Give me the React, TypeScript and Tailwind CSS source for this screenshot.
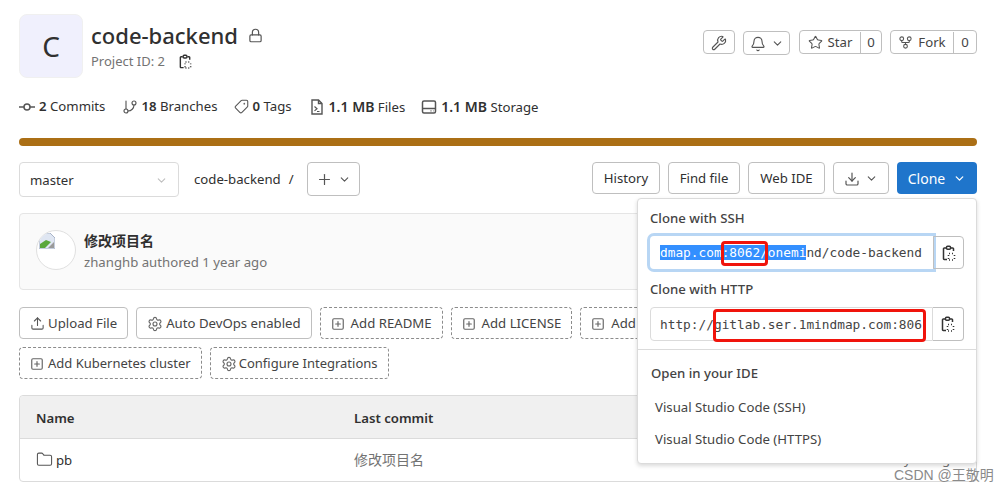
import React from "react";
import { Wrench, Bell, ChevronDown, Star, GitFork, Lock, Plus, Download, Upload, Settings, SquarePlus, Folder, GitBranch, Tag } from "lucide-react";

const sans = "font-['Noto_Sans','Open_Sans',sans-serif]";
const mono = "font-['DejaVu_Sans_Mono',monospace]";
const cjk = "font-['Noto_Sans','Noto_Sans_CJK_SC',sans-serif]";

function Clip({ size = 16 }: { size?: number }) {
  return (
    <svg width={size} height={size} viewBox="0 0 16 16" fill="none" stroke="#333" strokeWidth="1.5">
      <path d="M5 3H3.2a.7.7 0 0 0-.7.7v10.1a.7.7 0 0 0 .7.7H6" />
      <path d="M10 3h1.8a.7.7 0 0 1 .7.7V6" />
      <rect x="5.5" y="1.3" width="4" height="3" rx="1" />
      <path d="M8 8.5h1M11 8.5h1M13.5 10v1M13.5 13v1M8 15h1M11 15h1M7.5 10v1M7.5 13v1" strokeWidth="1.6" />
    </svg>
  );
}

function CommitIcon() {
  return (
    <svg width="16" height="16" viewBox="0 0 16 16" fill="none" stroke="#555" strokeWidth="1.5">
      <circle cx="8" cy="8" r="3" />
      <path d="M0 8h5M11 8h5" />
    </svg>
  );
}

function FileIcon() {
  return (
    <svg width="16" height="16" viewBox="0 0 16 16" fill="none" stroke="#555" strokeWidth="1.4">
      <path d="M3 1h6.5L13 4.5V15H3z" />
      <path d="M9.5 1v3.5H13" />
      <path d="M5.5 7.5L8 9.7l-2.5 2.2M8 12.5h2.5" strokeWidth="1.2" />
    </svg>
  );
}

function DiskIcon() {
  return (
    <svg width="16" height="16" viewBox="0 0 16 16" fill="none" stroke="#555" strokeWidth="1.5">
      <rect x="1.5" y="2" width="13" height="12" rx="1.5" />
      <path d="M1.5 9.5h13" />
      <path d="M9.5 11.8h1M12 11.8h.5" strokeWidth="1.3" />
    </svg>
  );
}

function Btn({ children, className = "" }: { children: React.ReactNode; className?: string }) {
  return (
    <div className={`flex items-center justify-center rounded border border-[#bfbfbf] bg-white pt-[1px] text-[13.2px] text-[#303030] ${className}`}>
      {children}
    </div>
  );
}

function Stat({ icon, bold, label, className = "", boldClass = "text-[13.2px]" }: { icon: React.ReactNode; bold: string; label: string; className?: string; boldClass?: string }) {
  return (
    <div className={`flex items-center text-[13.2px] text-[#303030] ${className}`}>
      {icon}
      <span className="whitespace-nowrap"><b className={`font-semibold ${boldClass}`}>{bold}</b> {label}</span>
    </div>
  );
}

function ActionBtn({ icon, label, dashed, className = "gap-[5px] text-[13.2px]" }: { icon: React.ReactNode; label: string; dashed?: boolean; className?: string }) {
  return (
    <div className={`flex h-[32px] shrink-0 items-center rounded border px-[10px] pt-[1px] text-[#444] ${dashed ? "border-dashed border-[#8c8c8c]" : "border-[#bfbfbf]"} ${className}`}>
      {icon}
      <span>{label}</span>
    </div>
  );
}

export default function App() {
  const plus = <SquarePlus size={14} strokeWidth={2} color="#666" />;
  const gear = <Settings size={16} strokeWidth={1.7} color="#666" />;
  return (
    <div className={`relative h-[492px] w-[1008px] overflow-hidden bg-white ${sans}`}>
      <div className="box-content flex w-[958px] flex-col pl-[19px]">
        {/* header */}
        <div className="flex items-start justify-between pt-[14px]">
          <div className="flex">
            <div className="flex h-[64px] w-[64px] items-center justify-center rounded-lg border border-[#f0f0f0] bg-[#f0f0fd] text-[28px] text-[#303030]">C</div>
            <div className="ml-[8px] flex flex-col pt-[5px]">
              <div className="flex items-center gap-[10px] leading-[32px]">
                <span className="text-[22px] font-medium text-[#303030]">code-backend</span>
                <Lock size={15} strokeWidth={1.9} color="#555" />
              </div>
              <div className="flex items-center gap-[13px] text-[13px] leading-[20px] text-[#737373]">
                <span>Project ID: 2</span>
                <Clip size={15} />
              </div>
            </div>
          </div>
          <div className="flex items-start pt-[16px]">
            <Btn className="h-[24px] w-[32px]"><Wrench size={16} color="#555" strokeWidth={1.7} /></Btn>
            <Btn className="ml-[8px] mt-[1px] h-[24px] w-[47px] gap-[5px]"><Bell size={16} color="#555" strokeWidth={1.7} /><ChevronDown size={13} color="#555" strokeWidth={2} /></Btn>
            <div className="ml-[9px] flex h-[24px] items-center rounded border border-[#bfbfbf] pt-[1px] text-[13.2px] text-[#444]">
              <div className="flex w-[60px] items-center justify-center gap-[5px]"><Star size={15} strokeWidth={1.7} color="#555" />Star</div>
              <div className="flex h-full w-[21px] items-center justify-center border-l border-[#bfbfbf]">0</div>
            </div>
            <div className="ml-[8px] flex h-[24px] items-center rounded border border-[#bfbfbf] pt-[1px] text-[13.2px] text-[#444]">
              <div className="flex w-[62px] items-center justify-center gap-[5px]"><GitFork size={15} strokeWidth={1.7} color="#555" />Fork</div>
              <div className="flex h-full w-[23px] items-center justify-center border-l border-[#bfbfbf]">0</div>
            </div>
          </div>
        </div>

        {/* stats */}
        <div className="mt-[19px] flex h-[20px] items-center">
          <Stat className="gap-[4px]" icon={<CommitIcon />} bold="2" label="Commits" />
          <Stat className="ml-[17px] gap-[3px]" icon={<GitBranch size={16} strokeWidth={1.7} color="#555" />} bold="18" label="Branches" />
          <Stat className="ml-[16px] gap-[4px]" icon={<Tag size={15} strokeWidth={1.7} color="#555" className="-scale-x-100" />} bold="0" label="Tags" />
          <Stat className="ml-[17px] gap-[4px]" boldClass="text-[14px]" icon={<FileIcon />} bold="1.1 MB" label="Files" />
          <Stat className="ml-[16px] gap-[4px]" boldClass="text-[14px]" icon={<DiskIcon />} bold="1.1 MB" label="Storage" />
        </div>

        {/* language bar */}
        <div className="mt-[21px] h-[8px] rounded bg-[#ab6f15]" />

        {/* toolbar */}
        <div className="mt-[16px] flex items-start justify-between">
          <div className="flex items-start">
            <div className="flex h-[35px] w-[160px] items-center justify-between rounded border border-[#dbdbdb] px-[10px] pt-[2px] text-[13.2px] text-[#303030]">
              <span>master</span>
              <ChevronDown size={13} color="#bfbfbf" strokeWidth={2} />
            </div>
            <div className="flex h-[34px] items-center pl-[15px] pt-[1px] text-[13.2px] text-[#303030]">code-backend<span className="ml-[8px] mr-[13px]">/</span></div>
            <Btn className="h-[34px] w-[53px] gap-[5px]"><Plus size={17} strokeWidth={1.7} color="#555" /><ChevronDown size={13} strokeWidth={2} color="#555" /></Btn>
          </div>
          <div className="flex items-center gap-[8px]">
            <Btn className="h-[32px] w-[68px]">History</Btn>
            <Btn className="h-[32px] w-[72px]">Find file</Btn>
            <Btn className="h-[32px] w-[77px]">Web IDE</Btn>
            <Btn className="h-[32px] w-[56px] gap-[5px]"><Download size={16} strokeWidth={1.8} color="#555" /><ChevronDown size={13} strokeWidth={2} color="#555" /></Btn>
            <div className="flex h-[32px] w-[80px] items-center justify-center gap-[8px] rounded bg-[#1f75cb] text-[14px] text-white">Clone<ChevronDown size={13} strokeWidth={2.4} color="#fff" /></div>
          </div>
        </div>

        {/* last commit */}
        <div className="mt-[16px] flex h-[77px] items-center rounded border border-[#e5e5e5] bg-[#fafafa] pl-[16px]">
          <div className="-mt-[3px] h-[40px] w-[40px] shrink-0 overflow-hidden rounded-full border border-[#e0e0e0] bg-white">
            <svg width="16" height="16" viewBox="0 0 16 16" className="ml-[2px] mt-[2px]">
              <path d="M0 0h11l5 5v11H0z" fill="#dfe6f2" stroke="#a9b4c8" strokeWidth="1" />
              <path d="M1 11l6-4 5 2-6 6H1z" fill="#5aa83c" />
              <path d="M9 15l6-6v6z" fill="#9a9a9a" />
            </svg>
          </div>
          <div className="ml-[8px] flex flex-col">
            <span className={`${cjk} text-[14px] font-semibold leading-[20px] text-[#303030]`}>修改项目名</span>
            <span className="mt-[1px] text-[13.2px] leading-[20px] text-[#737373]">zhanghb authored 1 year ago</span>
          </div>
        </div>

        {/* action buttons */}
        <div className="mt-[17px] flex flex-col gap-[8px]">
          <div className="flex gap-[8px]">
            <ActionBtn className="gap-[3px] text-[13.2px]" icon={<Upload size={15} strokeWidth={1.7} color="#555" />} label="Upload File" />
            <ActionBtn className="gap-[3px] text-[13.2px]" icon={gear} label="Auto DevOps enabled" />
            <ActionBtn className="gap-[6px] text-[13.2px]" dashed icon={plus} label="Add README" />
            <ActionBtn className="gap-[6px] text-[13.2px]" dashed icon={plus} label="Add LICENSE" />
            <ActionBtn className="gap-[6px] text-[13.2px]" dashed icon={plus} label="Add CHANGELOG" />
          </div>
          <div className="flex gap-[8px]">
            <ActionBtn className="gap-[4px] text-[13px]" dashed icon={plus} label="Add Kubernetes cluster" />
            <ActionBtn className="gap-[2px] text-[13px]" dashed icon={gear} label="Configure Integrations" />
          </div>
        </div>

        {/* table */}
        <div className="mt-[16px] flex h-[87px] flex-col rounded border border-[#dbdbdb]">
          <div className="flex h-[43px] items-center rounded-t border-b border-[#dbdbdb] bg-[#f0f0f0] pl-[16px] pt-[3px] text-[13.2px] font-semibold text-[#303030]">
            <span className="w-[318px]">Name</span>
            <span>Last commit</span>
          </div>
          <div className="flex flex-1 items-center pl-[16px] text-[13.2px] text-[#303030]">
            <div className="flex w-[318px] items-center gap-[3px]">
              <Folder size={17} strokeWidth={1.5} color="#555" />
              <span className="pt-[2px]">pb</span>
            </div>
            <span className={`${cjk} -mt-[2px] text-[14px] text-[#737373]`}>修改项目名</span>
            <span className="ml-auto pr-[18px] text-[#737373]">1 year ago</span>
          </div>
        </div>
      </div>

      {/* clone dropdown */}
      <div className="absolute left-[637px] top-[198px] h-[266px] w-[340px] rounded border border-[#dbdbdb] bg-white shadow-[0_2px_4px_rgba(0,0,0,0.15)]">
        <div className="px-[12px] pt-[9px]">
          <div className="text-[13.2px] font-medium leading-[20px] text-[#444]">Clone with SSH</div>
          <div className="mt-[8px] flex h-[33px]">
            <div className={`flex w-[283px] items-center overflow-hidden rounded-l bg-white pl-[10px] pt-[1px] text-[12.8px] text-[#444] shadow-[0_0_0_3px_#b8d6f4] ${mono}`}>
              <span className="whitespace-nowrap"><span className="bg-[#338fff] text-white">dmap.com:8062/onemi</span>nd/code-backend</span>
            </div>
            <div className="flex w-[31px] items-center justify-center rounded-r border border-[#bfbfbf]"><Clip /></div>
          </div>
          <div className="mt-[10px] text-[13.2px] font-medium leading-[20px] text-[#444]">Clone with HTTP</div>
          <div className="mt-[8px] flex h-[34px]">
            <div className={`flex w-[283px] items-center overflow-hidden whitespace-nowrap rounded-l border border-[#dbdbdb] pl-[9px] pt-[1px] text-[12.8px] text-[#444] ${mono}`}>http://gitlab.ser.1mindmap.com:806</div>
            <div className="flex w-[31px] items-center justify-center rounded-r border border-l-0 border-[#bfbfbf]"><Clip /></div>
          </div>
        </div>
        <div className="mt-[8px] border-t border-[#dbdbdb]" />
        <div className="px-[13px] pt-[13px] text-[13.2px] font-medium leading-[20px] text-[#444]">Open in your IDE</div>
        <div className="pl-[17px] pt-[14px] text-[13.2px] leading-[20px] text-[#444]">Visual Studio Code (SSH)</div>
        <div className="pl-[17px] pt-[12px] text-[13.2px] leading-[20px] text-[#444]">Visual Studio Code (HTTPS)</div>
      </div>

      {/* red annotation boxes */}
      <div className="absolute left-[721px] top-[241px] h-[25px] w-[47px] rounded-sm border-[3px] border-[#f0140c]" />
      <div className="absolute left-[713px] top-[309px] h-[33px] w-[213px] rounded-sm border-[3px] border-[#f0140c]" />

      {/* watermark */}
      <div className="absolute left-[894px] top-[465px] font-['Liberation_Sans','Noto_Sans_CJK_SC',sans-serif] text-[14px] leading-[20px] text-[#8a8a8a]">CSDN @王敬明</div>
    </div>
  );
}
